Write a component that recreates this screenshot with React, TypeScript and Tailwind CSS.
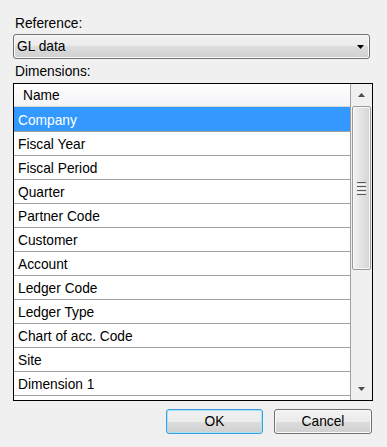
import React from "react";

const rows = [
  "Company",
  "Fiscal Year",
  "Fiscal Period",
  "Quarter",
  "Partner Code",
  "Customer",
  "Account",
  "Ledger Code",
  "Ledger Type",
  "Chart of acc. Code",
  "Site",
  "Dimension 1",
  "",
];

function Tri({ down, color }: { down: boolean; color: string }) {
  return (
    <svg width="7" height="4" viewBox="0 0 7 4" className="block">
      {down ? (
        <polygon points="0,0 7,0 3.5,4" fill={color} />
      ) : (
        <polygon points="0,4 7,4 3.5,0" fill={color} />
      )}
    </svg>
  );
}

export default function App() {
  return (
    <div className="w-[387px] h-[447px] bg-[#f0f0f0] pl-[13px] pt-[15px] flex flex-col font-['Liberation_Sans',Arial,sans-serif] text-[13.75px] text-black">
      <div className="ml-[2px] h-[16px] leading-[18px]">Reference:</div>
      <div className="mt-[3px] w-[357px] h-[25px] border border-[#707070] rounded-[3px] bg-[linear-gradient(#f2f2f2_0%,#ebebeb_50%,#dddddd_50%,#cfcfcf_100%)] shadow-[inset_0_0_0_1px_#fafafa] flex items-center pl-[3px] pr-[5px]">
        <span className="flex-1 leading-[18px]">GL data</span>
        <Tri down color="#000" />
      </div>
      <div className="mt-[4px] ml-[2px] h-[16px] leading-[18px]">Dimensions:</div>
      <div className="mt-[4px] w-[360px] h-[318px] border border-black bg-white flex overflow-hidden">
        <div className="w-[337px] border-r border-[#a0a0a0] flex flex-col overflow-hidden">
          <div className="h-[23px] shrink-0 border-b border-[#d5d5d5] bg-[linear-gradient(#ffffff,#f3f4f6)] flex items-center pl-[9px] pt-[3px]">
            Name
          </div>
          {rows.map((r, i) => (
            <div
              key={i}
              className={
                i === 0
                  ? "h-[24px] shrink-0 border-t border-[#3399ff] bg-[#3399ff] text-white flex items-center pl-[4px] pt-[4px]"
                  : "h-[24px] shrink-0 border-t border-[#a0a0a0] flex items-center pl-[4px] pt-[4px]"
              }
            >
              {r}
            </div>
          ))}
        </div>
        <div className="w-[21px] bg-[#f0f0f0] flex flex-col">
          <div className="h-[22px] shrink-0 flex items-center justify-center">
            <Tri down={false} color="#4a4a4a" />
          </div>
          <div className="mx-[1px] h-[164px] shrink-0 border border-[#9b9b9b] rounded-[2px] bg-[linear-gradient(to_right,#f3f3f3,#e4e4e4_45%,#d4d4d4)] shadow-[inset_0_0_0_1px_#f7f7f7] flex flex-col items-center justify-center gap-[1px]">
            <div className="w-[9px] h-[1px] bg-[#5a5a5a]" />
            <div className="w-[9px] h-[1px] bg-[#f8f8f8]" />
            <div className="w-[9px] h-[1px] bg-[#5a5a5a]" />
            <div className="w-[9px] h-[1px] bg-[#f8f8f8]" />
            <div className="w-[9px] h-[1px] bg-[#5a5a5a]" />
            <div className="w-[9px] h-[1px] bg-[#f8f8f8]" />
            <div className="w-[9px] h-[1px] bg-[#5a5a5a]" />
          </div>
          <div className="flex-1" />
          <div className="h-[22px] shrink-0 flex items-center justify-center">
            <Tri down color="#4a4a4a" />
          </div>
        </div>
      </div>
      <div className="mt-[8px] flex justify-end gap-[11px] pr-[15px]">
        <button className="w-[97px] h-[25px] border border-[#3c9ee0] rounded-[3px] bg-[linear-gradient(#f2f2f2_0%,#ebebeb_50%,#dddddd_50%,#cfcfcf_100%)] shadow-[inset_0_0_0_1px_#a8e2f8] flex items-center justify-center leading-[18px]">
          OK
        </button>
        <button className="w-[98px] h-[25px] border border-[#707070] rounded-[3px] bg-[linear-gradient(#f2f2f2_0%,#ebebeb_50%,#dddddd_50%,#cfcfcf_100%)] shadow-[inset_0_0_0_1px_#fafafa] flex items-center justify-center leading-[18px]">
          Cancel
        </button>
      </div>
    </div>
  );
}
